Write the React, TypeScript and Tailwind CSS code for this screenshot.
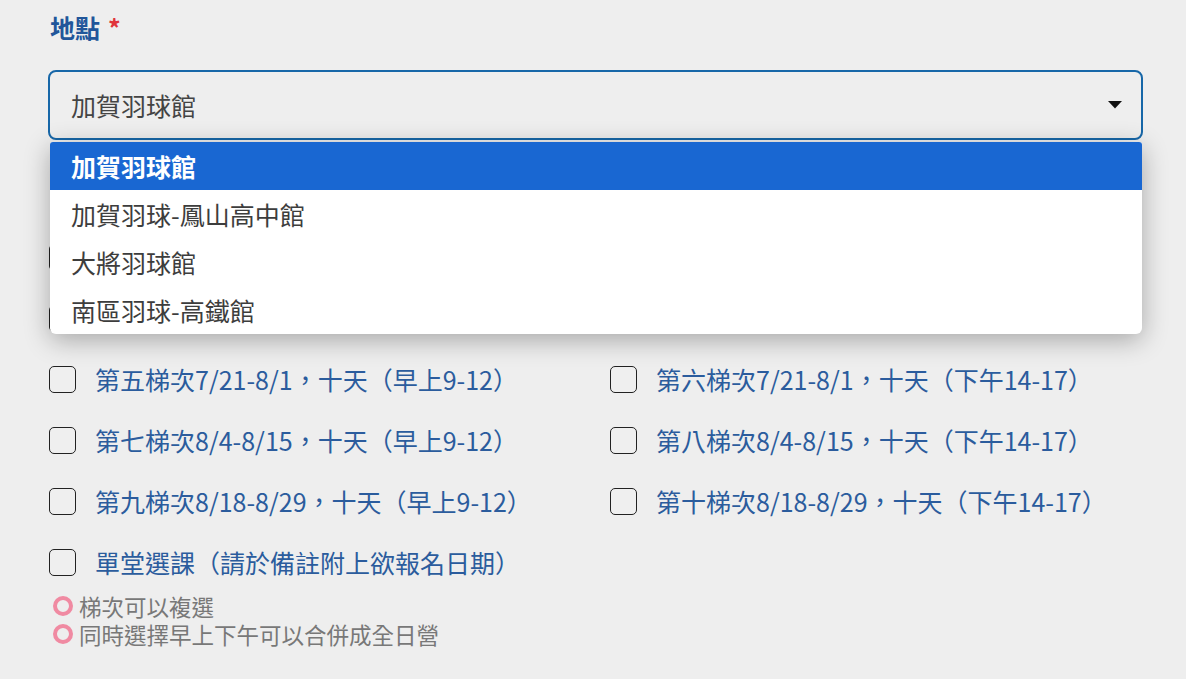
import React from "react";

const FONT = { fontFamily: '"Noto Sans CJK TC", "Noto Sans", sans-serif' };

const rows: [string, string | null][] = [
  ["第一梯次7/7-7/18，十天（早上9-12）", "第二梯次7/7-7/18，十天（下午14-17）"],
  ["第三梯次7/14-7/25，十天（早上9-12）", "第四梯次7/14-7/25，十天（下午14-17）"],
  ["第五梯次7/21-8/1，十天（早上9-12）", "第六梯次7/21-8/1，十天（下午14-17）"],
  ["第七梯次8/4-8/15，十天（早上9-12）", "第八梯次8/4-8/15，十天（下午14-17）"],
  ["第九梯次8/18-8/29，十天（早上9-12）", "第十梯次8/18-8/29，十天（下午14-17）"],
  ["單堂選課（請於備註附上欲報名日期）", null],
];

function Check({ label }: { label: string }) {
  return (
    <div className="flex h-[61px] items-center">
      <div className="ml-[1px] h-[27px] w-[27px] shrink-0 rounded-[5px] border border-[#222] bg-[#efefef]" />
      <span className="ml-[19px] whitespace-nowrap text-[25px] leading-none text-[#2b5c9d]">{label}</span>
    </div>
  );
}

const options = ["加賀羽球館", "加賀羽球-鳳山高中館", "大將羽球館", "南區羽球-高鐵館"];

export default function App() {
  return (
    <div className="min-h-[679px] w-full overflow-hidden bg-[#eeeeee]" style={FONT}>
      <div className="relative ml-[48px] w-[1095px]">
        <div className="ml-[2px] mt-[9px] flex h-[36px] items-center text-[25px] font-bold leading-none text-[#21569a]">
          地點<span className="ml-[8px] text-[#e0343b]">*</span>
        </div>
        <div className="relative mt-[25px]">
          <div className="flex h-[70px] items-center justify-between rounded-[8px] border-2 border-[#1767a8] bg-[#eeeeee] pl-[21px] pr-[19px]">
            <span className="text-[25px] leading-none text-[#444]">加賀羽球館</span>
            <svg width="14" height="8" viewBox="0 0 14 8"><path d="M0 0 L14 0 L7 7.5 Z" fill="#111" /></svg>
          </div>
          <div className="absolute left-[2px] top-[72px] z-10 w-[1092px] overflow-hidden rounded-b-[6px] rounded-t-[3px] bg-white shadow-[0_6px_26px_rgba(0,0,0,0.3)]">
            {options.map((o, i) => (
              <div
                key={o}
                className={
                  i === 0
                    ? "flex h-[48px] items-center bg-[#1967d2] px-[21px] text-[25px] font-bold leading-none text-white"
                    : "flex h-[48px] items-center px-[21px] text-[25px] leading-none text-[#3d3d3d]"
                }
              >
                {o}
              </div>
            ))}
          </div>
        </div>
        <div className="mt-[87px] grid grid-cols-[561px_1fr]">
          {rows.map(([a, b], i) => (
            <React.Fragment key={i}>
              <Check label={a} />
              {b ? <Check label={b} /> : <div />}
            </React.Fragment>
          ))}
        </div>
        <div className="mt-[-1px] flex flex-col text-[22.5px] leading-[28px] text-[#787878]">
          <div className="flex items-center">
            <span className="ml-[5px] mr-[6px] h-[20px] w-[20px] shrink-0 rounded-full border-[4px] border-[#f08aa2]" />
            梯次可以複選
          </div>
          <div className="flex items-center">
            <span className="ml-[5px] mr-[6px] h-[20px] w-[20px] shrink-0 rounded-full border-[4px] border-[#f08aa2]" />
            同時選擇早上下午可以合併成全日營
          </div>
        </div>
      </div>
    </div>
  );
}
